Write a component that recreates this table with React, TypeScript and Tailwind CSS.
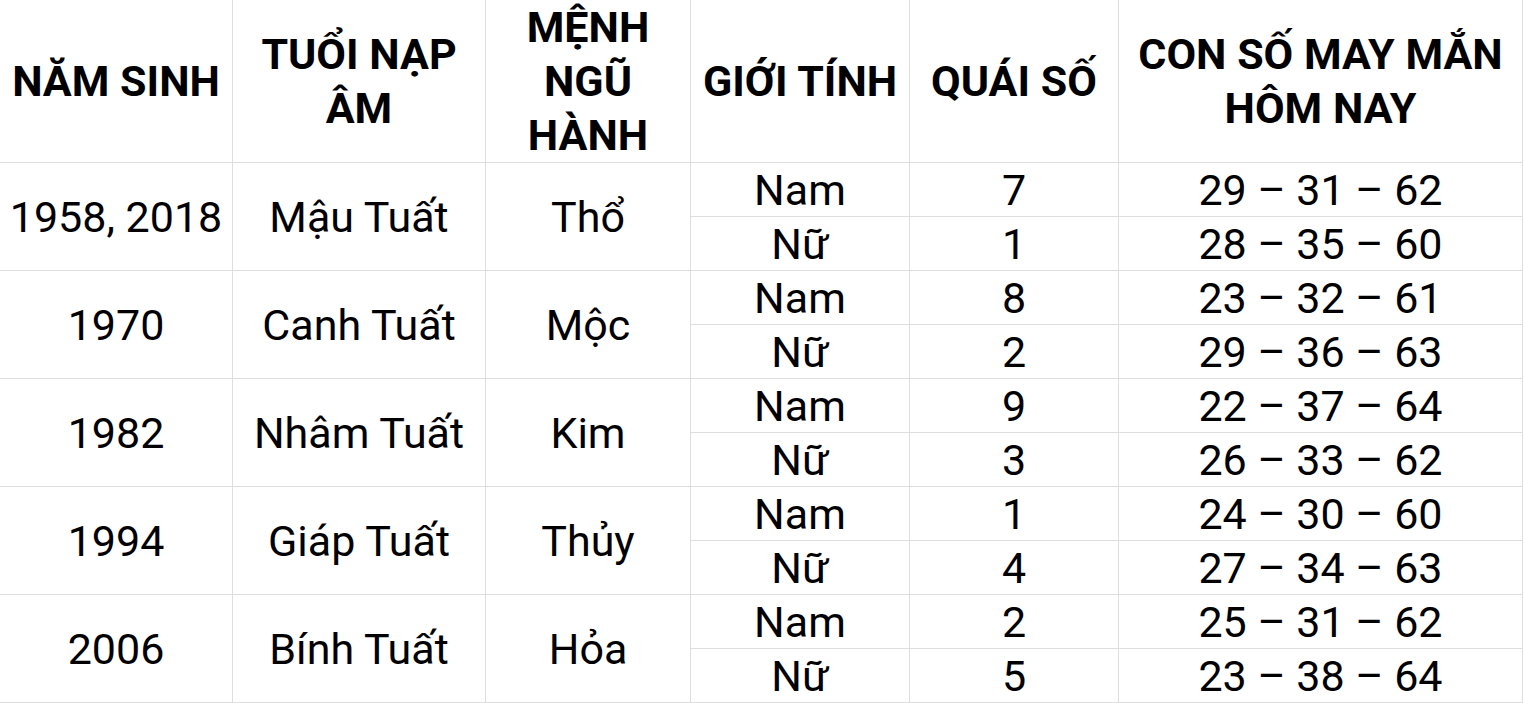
import React from "react";

const rows = [
  { year: "1958, 2018", tuoi: "Mậu Tuất", menh: "Thổ", nam: ["7", "29 – 31 – 62"], nu: ["1", "28 – 35 – 60"] },
  { year: "1970", tuoi: "Canh Tuất", menh: "Mộc", nam: ["8", "23 – 32 – 61"], nu: ["2", "29 – 36 – 63"] },
  { year: "1982", tuoi: "Nhâm Tuất", menh: "Kim", nam: ["9", "22 – 37 – 64"], nu: ["3", "26 – 33 – 62"] },
  { year: "1994", tuoi: "Giáp Tuất", menh: "Thủy", nam: ["1", "24 – 30 – 60"], nu: ["4", "27 – 34 – 63"] },
  { year: "2006", tuoi: "Bính Tuất", menh: "Hỏa", nam: ["2", "25 – 31 – 62"], nu: ["5", "23 – 38 – 64"] },
];

const cell = "flex items-center justify-center text-center border-r border-b border-[#dedede]";

export default function App() {
  return (
    <div
      className="w-[1524px] h-[703px] bg-white text-black overflow-hidden"
      style={{ fontFamily: "Roboto, 'Liberation Sans', sans-serif" }}
    >
      <div className="grid grid-cols-[233px_253px_205px_219px_209px_404px] grid-rows-[163px_repeat(10,54px)] text-[43px] leading-[54px]">
        <div className={`${cell} font-bold px-1`}>NĂM SINH</div>
        <div className={`${cell} font-bold px-6`}>TUỔI NẠP ÂM</div>
        <div className={`${cell} font-bold px-6`}>MỆNH NGŨ HÀNH</div>
        <div className={`${cell} font-bold px-1`}>GIỚI TÍNH</div>
        <div className={`${cell} font-bold px-1`}>QUÁI SỐ</div>
        <div className={`${cell} font-bold px-2`}>CON SỐ MAY MẮN HÔM NAY</div>
        {rows.map((r) => (
          <React.Fragment key={r.year}>
            <div className={`${cell} row-span-2`}>{r.year}</div>
            <div className={`${cell} row-span-2`}>{r.tuoi}</div>
            <div className={`${cell} row-span-2`}>{r.menh}</div>
            <div className={cell}>Nam</div>
            <div className={cell}>{r.nam[0]}</div>
            <div className={cell}>{r.nam[1]}</div>
            <div className={cell}>Nữ</div>
            <div className={cell}>{r.nu[0]}</div>
            <div className={cell}>{r.nu[1]}</div>
          </React.Fragment>
        ))}
      </div>
    </div>
  );
}
